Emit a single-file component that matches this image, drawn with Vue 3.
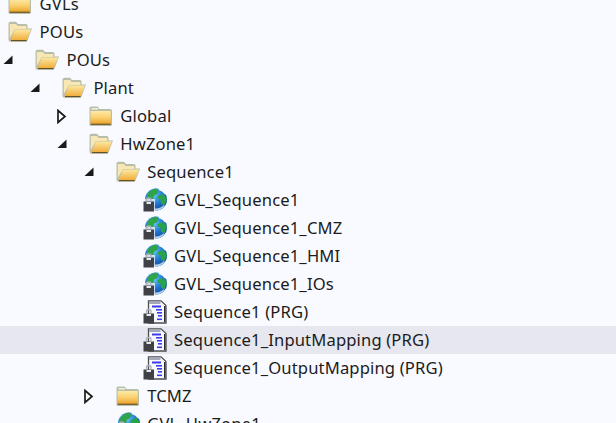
<script setup>
const rows = [
  { depth: 0, icon: 'closed', label: 'GVLs' },
  { depth: 0, icon: 'open', label: 'POUs' },
  { depth: 1, icon: 'open', label: 'POUs', arrow: 'down' },
  { depth: 2, icon: 'open', label: 'Plant', arrow: 'down' },
  { depth: 3, icon: 'closed', label: 'Global', arrow: 'right' },
  { depth: 3, icon: 'open', label: 'HwZone1', arrow: 'down' },
  { depth: 4, icon: 'open', label: 'Sequence1', arrow: 'down' },
  { depth: 5, icon: 'globe', label: 'GVL_Sequence1' },
  { depth: 5, icon: 'globe', label: 'GVL_Sequence1_CMZ' },
  { depth: 5, icon: 'globe', label: 'GVL_Sequence1_HMI' },
  { depth: 5, icon: 'globe', label: 'GVL_Sequence1_IOs' },
  { depth: 5, icon: 'doc', label: 'Sequence1 (PRG)' },
  { depth: 5, icon: 'doc', label: 'Sequence1_InputMapping (PRG)', hover: true },
  { depth: 5, icon: 'doc', label: 'Sequence1_OutputMapping (PRG)' },
  { depth: 4, icon: 'closed', label: 'TCMZ', arrow: 'right' },
  { depth: 4, icon: 'globe', label: 'GVL_HwZone1' },
]
const indent = (d) => ({ marginLeft: `${(d - 1) * 26.9 + 3}px` })
</script>

<template>
  <div class="tree">
    <div v-for="(r, i) in rows" :key="i" class="row" :class="{ hover: r.hover }">
      <div class="inner" :style="indent(r.depth)">
        <span class="arrow">
          <svg v-if="r.arrow === 'down'" width="10" height="10" viewBox="0 0 10 10">
            <path d="M9.5 0.5V9H0.5Z" fill="#1a1a1a" />
          </svg>
          <svg v-else-if="r.arrow === 'right'" width="10" height="15" viewBox="0 0 10 15">
            <path d="M1 1.5L8 7.5L1 13.5Z" fill="#fff" stroke="#1a1a1a" stroke-width="1.7" />
          </svg>
        </span>

        <svg v-if="r.icon === 'closed'" class="icon" width="24" height="24" viewBox="0 0 24 24">
          <defs>
            <linearGradient id="fc" x1="0" y1="0" x2="0" y2="1">
              <stop offset="0" stop-color="#fdeaa4" />
              <stop offset="0.5" stop-color="#fbd070" />
              <stop offset="1" stop-color="#eba42a" />
            </linearGradient>
          </defs>
          <path d="M0.5 4Q0.5 2.5 2 2.5H8.5L10.5 5H21Q23 5 23 7V20.5Q23 22 21.5 22H2Q0.5 22 0.5 20.5Z" fill="#b9bea8" />
          <rect x="1.6" y="7" width="20.2" height="13" fill="url(#fc)" />
          <rect x="1.6" y="19.6" width="20.2" height="1.4" fill="#7a6430" />
          <rect x="2.5" y="4" width="6.5" height="1.6" fill="#eeeedc" />
        </svg>

        <svg v-else-if="r.icon === 'open'" class="icon" width="24" height="24" viewBox="0 0 24 24">
          <defs>
            <linearGradient id="fo" x1="0" y1="0" x2="0" y2="1">
              <stop offset="0" stop-color="#fde8a0" />
              <stop offset="1" stop-color="#f2ae3c" />
            </linearGradient>
          </defs>
          <path d="M0.5 3.5Q0.5 1.8 2.5 1.8H8L10 4H18Q19.5 4 19.5 5.5V8.5H24L19.5 20.5Q19 21.8 17.5 21.8H2.5Q0.5 21.8 0.5 20Z" fill="#b9bea8" />
          <path d="M1.8 4H8L9.5 6H18.2V9H7L1.8 18Z" fill="#f8e6b4" />
          <path d="M7 9.6H23L18.8 20H2.6Z" fill="url(#fo)" />
          <path d="M3 20H18.6V21.2H3Z" fill="#63522a" />
        </svg>

        <svg v-else-if="r.icon === 'globe'" class="icon" width="24" height="24" viewBox="0 0 24 24">
          <defs>
            <radialGradient id="gb" cx="0.4" cy="0.3" r="0.8">
              <stop offset="0" stop-color="#66c8f6" />
              <stop offset="0.55" stop-color="#1c74cf" />
              <stop offset="1" stop-color="#14408f" />
            </radialGradient>
          </defs>
          <circle cx="13" cy="11.5" r="11" fill="url(#gb)" />
          <path d="M4.5 6Q8 1 13 0.5L15.5 3.5L13.5 6.5L11 7.5L10 11H3.5Z" fill="#2fa449" />
          <path d="M14.5 8L20.5 6L24 11L21 17.5L18 15.5L17.5 11.5L14.5 10.5Z" fill="#28a346" />
          <path d="M16 0.4Q22 1.6 24 7L21.5 6Q19.5 3 15.5 2Z" fill="#f6f9fd" />
          <path d="M11.5 20.5Q17 21.2 21.5 16.5L20.5 19.5Q16 23.5 11.5 22.5Z" fill="#b4d0ec" />
          <rect x="0" y="11" width="12" height="13" fill="#f9faff" opacity="0.75" />
          <rect x="0.5" y="13.5" width="10.5" height="10" fill="#3f4146" />
          <path d="M3.5 13.5V11.5Q3.5 10 5.7 10Q8 10 8 11.5V13.5" fill="none" stroke="#aeb2ba" stroke-width="1.3" />
          <rect x="3.5" y="14" width="4.5" height="2" fill="#e6e8ec" />
        </svg>

        <svg v-else class="icon" width="24" height="24" viewBox="0 0 24 24">
          <path d="M5.5 0.8H18L23 5.5V23H5.5Z" fill="#f9faff" stroke="#4c4e54" stroke-width="1.3" />
          <path d="M6.2 1.5H17.5V4H6.2Z" fill="#a2a8b6" />
          <path d="M21 6V22H22.4V6Z" fill="#2c2d31" />
          <g fill="#3b3cf0">
            <rect x="9" y="5.5" width="9" height="2" />
            <rect x="13" y="9" width="6" height="1.6" />
            <rect x="14" y="12" width="5" height="1.6" />
            <rect x="15" y="15" width="4" height="1.6" />
            <rect x="14" y="18.5" width="5" height="1.6" />
          </g>
          <rect x="0.5" y="13.5" width="10.5" height="10" fill="#3f4146" />
          <path d="M3.5 13.5V11Q3.5 9.5 5.7 9.5Q8 9.5 8 11V13.5" fill="none" stroke="#aeb2ba" stroke-width="1.3" />
          <rect x="3.5" y="14" width="4.5" height="2" fill="#e6e8ec" />
        </svg>

        <span class="label">{{ r.label }}</span>
      </div>
    </div>
  </div>
</template>

<style scoped>
.tree {
  width: 616px;
  height: 423px;
  overflow: hidden;
  background: #f9faff;
  font-family: "Noto Sans", "Open Sans", sans-serif;
  font-size: 16.6px;
  letter-spacing: 0.14px;
  color: #1c1c1c;
}
.row {
  height: 28px;
}
.row:first-child {
  margin-top: -10px;
}
.row.hover {
  background: #e6e7ef;
}
.inner {
  display: flex;
  align-items: center;
  height: 28px;
}
.arrow {
  flex: none;
  width: 32px;
  display: flex;
  align-items: center;
}
.icon {
  flex: none;
  filter: blur(0.3px);
}
.label {
  margin-left: 7.5px;
  margin-bottom: 2px;
  white-space: nowrap;
}
</style>
